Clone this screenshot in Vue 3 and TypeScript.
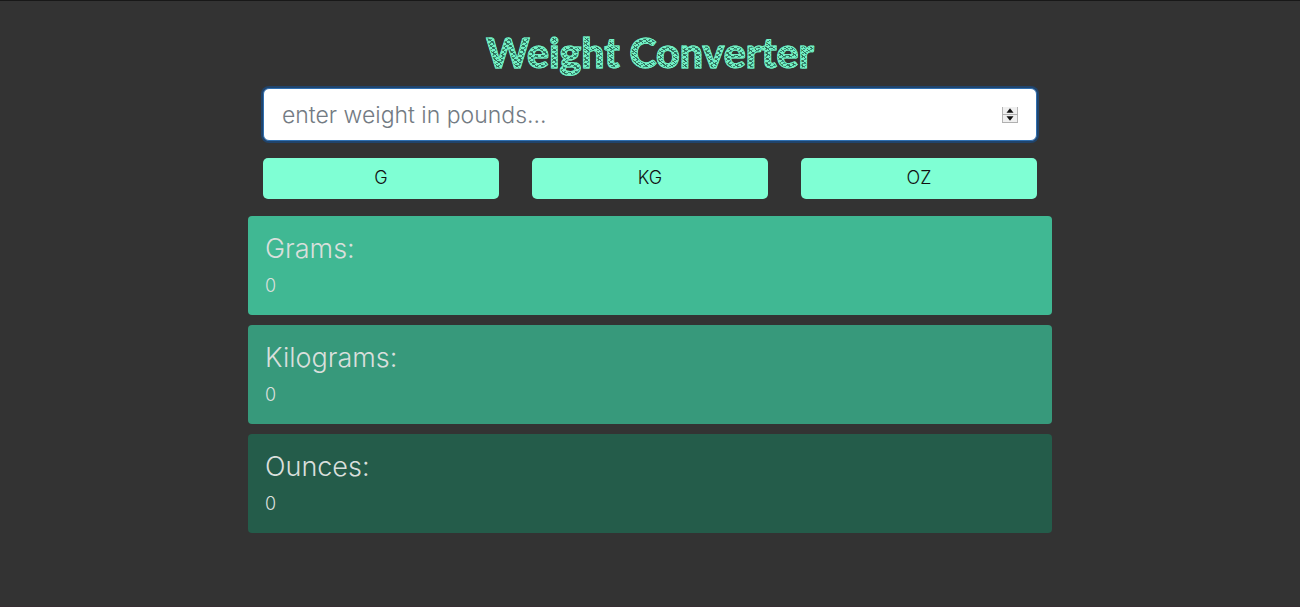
<script setup lang="ts">
import { computed, ref } from 'vue'

interface Unit {
  key: string
  short: string
  label: string
  factor: number
}

const units: Unit[] = [
  { key: 'grams', short: 'G', label: 'Grams:', factor: 453.59237 },
  { key: 'kilograms', short: 'KG', label: 'Kilograms:', factor: 0.45359237 },
  { key: 'ounces', short: 'OZ', label: 'Ounces:', factor: 16 },
]

const pounds = ref<number | ''>('')
const results = ref<Record<string, number>>({ grams: 0, kilograms: 0, ounces: 0 })
const amount = computed(() => Number(pounds.value) || 0)

function convert(unit: Unit) {
  results.value[unit.key] = Number((amount.value * unit.factor).toFixed(4))
}

function step(by: number) {
  pounds.value = amount.value + by
}
</script>

<template>
  <main class="page">
    <div class="container">
      <form class="converter" @submit.prevent>
        <h1 class="title">Weight Converter</h1>
        <div class="field">
          <input
            v-model="pounds"
            class="weight"
            type="number"
            aria-label="Weight in pounds"
            placeholder="enter weight in pounds..."
          />
          <div class="spinner">
            <button type="button" class="step" aria-label="Increase" @click="step(1)">
              <svg viewBox="0 0 16 7"><path d="M8 1 12 6H4z" /></svg>
            </button>
            <button type="button" class="step" aria-label="Decrease" @click="step(-1)">
              <svg viewBox="0 0 16 7"><path d="M8 6 12 1H4z" /></svg>
            </button>
          </div>
        </div>
        <div class="actions">
          <button v-for="u in units" :key="u.key" type="button" class="action" @click="convert(u)">
            {{ u.short }}
          </button>
        </div>
      </form>
      <section class="results">
        <article v-for="u in units" :key="u.key" class="card" :class="u.key">
          <h2 class="name">{{ u.label }}</h2>
          <output class="value">{{ results[u.key] }}</output>
        </article>
      </section>
    </div>
  </main>
</template>

<style>
body {
  margin: 0;
  background: #333;
}
</style>

<style scoped>
.page {
  box-sizing: border-box;
  min-height: 100vh;
  padding: 28px 16px 16px;
  border-top: 1px solid #181818;
  border-bottom: 1px solid #362d32;
  background: #333;
  font-family: Inter, "Open Sans", sans-serif;
  font-weight: 300;
}

.container {
  max-width: 804px;
  margin: 0 auto;
}

.converter {
  padding: 0 15px;
}

.title {
  width: fit-content;
  margin: 0 auto 11px;
  font: 900 41px/48px Lato, "Open Sans", sans-serif;
  color: transparent;
  background:
    repeating-linear-gradient(38deg, transparent 0 3px, #2f6b58 3px 4px),
    repeating-linear-gradient(152deg, #72f0c4 0 2px, #3a8f74 2px 3px);
  -webkit-background-clip: text;
  background-clip: text;
  -webkit-text-stroke: 1px #72f0c4;
}

.field {
  position: relative;
}

.weight {
  display: block;
  box-sizing: border-box;
  width: 100%;
  height: 53px;
  padding: 0 48px 0 18px;
  border: 1px solid #2f6fb0;
  border-radius: 6px;
  outline: none;
  background: #fff;
  box-shadow: 0 0 0 2px #20446c;
  color: #495057;
  font: inherit;
  font-size: 23px;
  appearance: textfield;
}

.weight::placeholder {
  color: #737b83;
  opacity: 1;
}

.spinner {
  position: absolute;
  top: 0;
  right: 19px;
  bottom: 0;
  display: flex;
  flex-direction: column;
  justify-content: center;
  gap: 1px;
}

.step {
  display: block;
  width: 16px;
  height: 7px;
  padding: 0;
  border: 0;
  border-right: 1px solid #b5b5b5;
  border-left: 1px solid #b5b5b5;
  background: #f0f0f0;
  box-shadow: 0 1px 0 #b0b0b0;
}

.step svg {
  display: block;
  width: 100%;
  height: 100%;
  fill: #111;
}

.actions {
  display: grid;
  grid-template-columns: repeat(3, 1fr);
  gap: 33px;
  margin: 17px 0;
}

.action {
  height: 41px;
  padding: 0 0 2px;
  border: 0;
  border-radius: 5px;
  background: #7fffd4;
  color: #111;
  font: inherit;
  font-size: 18px;
  cursor: pointer;
}

.results {
  display: grid;
  gap: 10px;
}

.card {
  padding: 16px 17px;
  border-radius: 4px;
  color: #d9dfdc;
}

.name {
  margin: 0 0 7px;
  font-size: 27px;
  font-weight: 300;
  line-height: 34px;
}

.value {
  display: block;
  font-size: 18px;
  line-height: 26px;
}

.grams {
  background: #40b893;
}

.kilograms {
  background: #37997b;
}

.ounces {
  background: #245c4a;
}
</style>
